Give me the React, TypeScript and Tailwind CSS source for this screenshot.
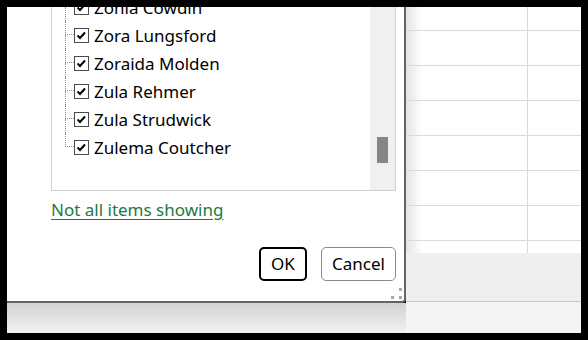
import React from "react";

const names = [
  "Zonia Cowdin",
  "Zora Lungsford",
  "Zoraida Molden",
  "Zula Rehmer",
  "Zula Strudwick",
  "Zulema Coutcher",
];

function Check() {
  return (
    <svg width="15" height="15" viewBox="0 0 15 15" className="shrink-0">
      <rect x="0.5" y="0.5" width="14" height="14" fill="#fff" stroke="#4a4a4a" />
      <path d="M3.5 7.5 L6 10 L11 4.5" fill="none" stroke="#000" strokeWidth="2" />
    </svg>
  );
}

export default function App() {
  const rows = [23, 34, 34, 34, 34, 34, 34, 12];
  return (
    <div
      className="w-[588px] h-[340px] bg-black p-[7px]"
      style={{ fontFamily: '"Noto Sans", "Open Sans", sans-serif' }}
    >
      <div className="flex w-[574px] h-[326px]">
        {/* left column: dialog + shadow */}
        <div className="flex flex-col w-[399px]">
          <div className="relative h-[296px] bg-white border-r-2 border-b-2 border-[#646464] rounded-br-[4px] flex flex-col pl-[44px]">
            {/* list box */}
            <div className="flex w-[345px] h-[184px] border-x border-b border-[#cfcfcf] overflow-hidden">
              <div className="flex-1 overflow-hidden pl-[13px]">
                <div className="flex flex-col mt-[-14px]">
                  {names.map((n, i) => {
                    const last = i === names.length - 1;
                    return (
                      <div key={n} className="flex items-center h-[28px]">
                        <div className="flex flex-col w-[9px] h-[28px] shrink-0">
                          <div className="h-[14px] border-l border-b border-dotted border-[#8c8c8c]" />
                          <div
                            className={
                              last
                                ? "h-[14px]"
                                : "h-[14px] border-l border-dotted border-[#8c8c8c]"
                            }
                          />
                        </div>
                        <Check />
                        <span className="ml-[5px] text-[17px] leading-none text-black whitespace-nowrap">
                          {n}
                        </span>
                      </div>
                    );
                  })}
                </div>
              </div>
              <div className="w-[25px] bg-[#f0f0f0] pt-[130px] pl-[7px]">
                <div className="w-[11px] h-[26px] bg-[#868686]" />
              </div>
            </div>
            {/* link */}
            <div className="mt-[7px]">
              <span className="text-[17px] leading-[24px] text-[#1d7a45] underline underline-offset-[3px]">
                Not all items showing
              </span>
            </div>
            {/* buttons */}
            <div className="flex justify-end gap-[14px] mt-[25px] pr-[8px]">
              <button className="w-[48px] h-[34px] border-2 border-black rounded-[5px] bg-white text-[17px] text-black">
                OK
              </button>
              <button className="w-[75px] h-[34px] border border-[#8a8a8a] rounded-[5px] bg-white text-[17px] text-black">
                Cancel
              </button>
            </div>
            {/* resize grip */}
            <div className="absolute right-[2px] bottom-[2px] grid grid-cols-2 gap-[5px]">
              <div className="w-[3px] h-[3px]" />
              <div className="w-[3px] h-[3px] bg-[#a8a8a8]" />
              <div className="w-[3px] h-[3px] bg-[#a8a8a8]" />
              <div className="w-[3px] h-[3px] bg-[#a8a8a8]" />
            </div>
          </div>
          <div className="h-[30px] bg-[linear-gradient(to_bottom,#d2d2d2,#f2f2f2)]" />
        </div>
        {/* right column: spreadsheet */}
        <div className="flex flex-col w-[175px]">
          <div className="flex flex-col h-[246px] bg-white">
            {rows.map((h, i) => (
              <div
                key={i}
                className={
                  i < rows.length - 1
                    ? "flex border-b border-[#dadada] shrink-0"
                    : "flex shrink-0"
                }
                style={{ height: h + (i < rows.length - 1 ? 1 : 0) }}
              >
                <div className="w-[122px] border-r border-[#dadada] bg-[linear-gradient(to_right,#e4e4e4,#ffffff_16px)]" />
                <div className="flex-1" />
              </div>
            ))}
          </div>
          <div className="h-[49px] bg-[#efefef] border-b border-[#c8c8c8]" />
          <div className="h-[31px] bg-[#f4f4f4]" />
        </div>
      </div>
    </div>
  );
}
